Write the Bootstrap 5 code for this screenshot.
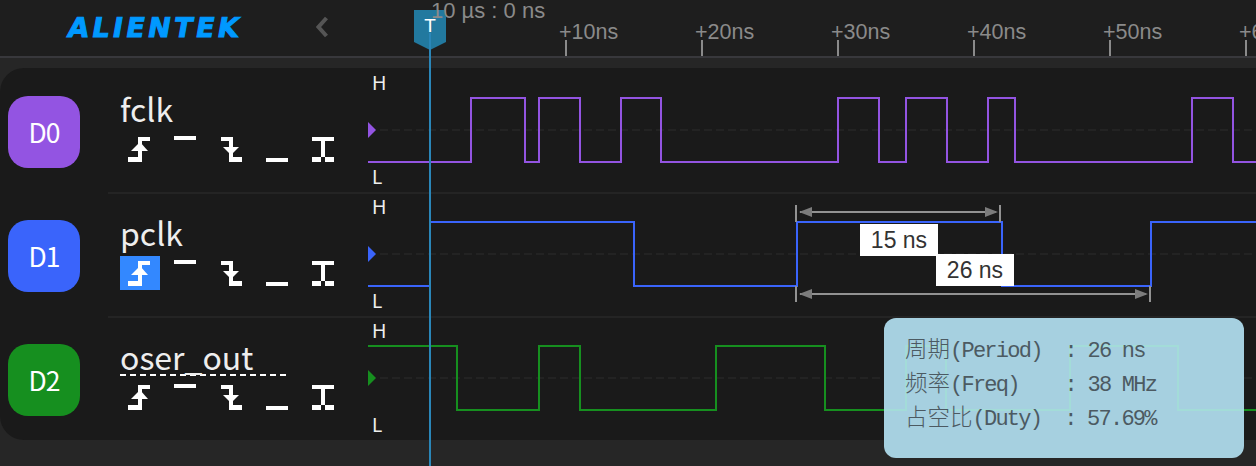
<!DOCTYPE html>
<html lang="zh">
<head>
    <meta charset="UTF-8">
    <meta name="viewport" content="width=device-width, initial-scale=1.0">
    <title>Logic analyzer</title>
    <link href="https://cdn.jsdelivr.net/npm/bootstrap@5.3.2/dist/css/bootstrap.min.css" rel="stylesheet">
    <style>
        body { background: #262626; width: 1256px; height: 466px; overflow: hidden; font-family: "Liberation Sans", sans-serif; }
        .scope { width: 1256px; height: 466px; overflow: hidden; }

        /* header + ruler */
        .scope-head { height: 58px; background: #1e1e1e; border-bottom: 2px solid #38383c; }
        .logo-box { flex: 0 0 368px; width: 368px; padding-left: 65px; padding-right: 38px; }
        .logo-text { display: inline-block; margin-top: 11px; font-family: "DejaVu Sans", sans-serif; font-weight: 700; font-size: 27px; line-height: 34px; letter-spacing: 3.4px; color: #0099ff; -webkit-text-stroke: 1px #0099ff; transform: skewX(-10deg); transform-origin: left bottom; }
        .ruler { padding-left: 198px; height: 56px; overflow: hidden; }
        .tick-item { flex: 0 0 136px; width: 136px; }
        .tick-label { margin-left: -7px; font-size: 21.5px; line-height: 16px; color: #8a8a8a; white-space: nowrap; }
        .tick-mark { width: 2px; height: 16px; margin-left: -1px; background: #8a8a8a; }

        /* channels */
        .panel { margin-top: 10px; height: 372px; padding-top: 2px; background: #1a1a1a; border-radius: 24px 0 0 24px; }
        .ch-row { height: 124px; }
        .ch-row:last-child { height: 122px; }
        .ch-badge { flex: 0 0 72px; width: 72px; height: 72px; margin: 26px 28px 0 8px; border-radius: 20px; color: #fff; font-family: "Noto Sans CJK SC", "Noto Sans", sans-serif; font-size: 26.5px; letter-spacing: -1px; }
        .bg-d0 { background: #9354e2; }
        .bg-d1 { background: #3a64fb; }
        .bg-d2 { background: #168f1f; }
        .ch-body { border-bottom: 2px solid #242424; padding-left: 12px; min-width: 0; }
        .ch-row:last-child .ch-body { border-bottom: 0; }
        .ch-info { flex: 0 0 248px; width: 248px; padding-top: 19px; }
        .ch-name { height: 39px; line-height: 38px; margin-bottom: 4px; font-family: "Noto Sans CJK SC", "Noto Sans", sans-serif; font-size: 32px; color: #eeeeee; }
        .ch-name.editing { width: 166px; border-bottom: 2px dashed #fff; }
        .trig-row { gap: 6px; }
        .trig-btn { width: 40px; height: 34px; padding: 0; border: 0; border-radius: 0; line-height: 0; color: #fff; }
        .trig-btn.active, .trig-btn:hover { background: #3388ff !important; color: #fff; }
        .trig-btn svg { width: 40px; height: 34px; display: block; }
        .wave { width: 888px; height: 122px; display: block; flex: 0 0 888px; }
        .wave text { font-family: "Noto Sans", sans-serif; font-size: 19.5px; fill: #eeeeee; }
        .wave .midline { stroke: #232323; stroke-width: 2; stroke-dasharray: 8 4; }
        .wave .sig { fill: none; stroke-width: 2; }
        .wave .dim { stroke: #929292; stroke-width: 2; fill: none; }
        .wave .dim-head { fill: #7c7c7c; }
        .measure-tag { position: absolute; width: 78px; height: 32px; background: #fff; color: #333; font-size: 23px; line-height: 32px; text-align: center; }
        .tag-a { left: 492px; top: 30px; }
        .tag-b { left: 568px; top: 60px; }

        /* cursor */
        .cursor-time { position: absolute; left: 431px; top: 0; font-size: 22px; line-height: 22px; color: #8a8a8a; white-space: nowrap; z-index: 4; }
        .cursor-flag { position: absolute; left: 414px; top: 10px; width: 32px; height: 40px; z-index: 3; }
        .cursor-t { position: absolute; left: 414px; top: 14px; width: 32px; text-align: center; color: #fff; font-size: 19px; line-height: 24px; z-index: 5; }
        .cursor-line { position: absolute; left: 429px; top: 33px; width: 2px; height: 433px; background: #2a86b8; z-index: 3; }

        /* info popup */
        .info-box { position: absolute; left: 884px; top: 318px; width: 360px; height: 140px; padding: 17px 21px; background: #a6d0e0; border-radius: 12px; overflow: hidden; z-index: 6; }
        .info-box svg { position: absolute; left: 0; top: 0; }
        .info-text { position: relative; margin: 0; font-family: "Liberation Mono", "Noto Sans CJK SC", monospace; font-size: 22px; letter-spacing: -1.75px; line-height: 34px; color: #4c5a62; white-space: pre; }
        .info-text span { font-family: "Noto Sans CJK SC", sans-serif; font-size: 22.5px; font-weight: 300; letter-spacing: 0; line-height: 0; }
    </style>
</head>
<body>
    <svg width="0" height="0" class="position-absolute">
        <symbol id="ic-rise" viewBox="0 0 40 34">
            <path shape-rendering="crispEdges" fill="currentColor" d="M18 5h12v4H22v21H8v-5h10z"/>
            <path fill="currentColor" d="M20 10l8 9H11z"/>
        </symbol>
        <symbol id="ic-high" viewBox="0 0 40 34">
            <rect x="8" y="4" width="22" height="4" fill="currentColor"/>
        </symbol>
        <symbol id="ic-fall" viewBox="0 0 40 34">
            <path shape-rendering="crispEdges" fill="currentColor" d="M9 5h12v20h9v5H17V9H9z"/>
            <path fill="currentColor" d="M11 15h16l-8 8z"/>
        </symbol>
        <symbol id="ic-low" viewBox="0 0 40 34">
            <rect x="8" y="26" width="22" height="4" fill="currentColor"/>
        </symbol>
        <symbol id="ic-edge" viewBox="0 0 40 34">
            <path shape-rendering="crispEdges" fill="currentColor" d="M8 5h22v4h-9v16h-4V9H8zM8 25h9v5H8zM21 25h9v5h-9z"/>
        </symbol>
    </svg>

    <div class="scope position-relative">
        <!-- HEADER -->
        <div class="scope-head d-flex">
            <div class="logo-box d-flex align-items-start justify-content-between">
                <span class="logo-text">ALIENTEK</span>
                <svg class="mt-3" width="14" height="22" viewBox="0 0 14 22">
                    <polyline points="10.5,2 2.5,11 10.5,20" fill="none" stroke="#555555" stroke-width="4"/>
                </svg>
            </div>
            <div class="ruler d-flex flex-grow-1">
                <div class="tick-item d-flex flex-column justify-content-end"><div class="tick-label">+10ns</div><div class="tick-mark"></div></div>
                <div class="tick-item d-flex flex-column justify-content-end"><div class="tick-label">+20ns</div><div class="tick-mark"></div></div>
                <div class="tick-item d-flex flex-column justify-content-end"><div class="tick-label">+30ns</div><div class="tick-mark"></div></div>
                <div class="tick-item d-flex flex-column justify-content-end"><div class="tick-label">+40ns</div><div class="tick-mark"></div></div>
                <div class="tick-item d-flex flex-column justify-content-end"><div class="tick-label">+50ns</div><div class="tick-mark"></div></div>
                <div class="tick-item d-flex flex-column justify-content-end"><div class="tick-label">+60ns</div><div class="tick-mark"></div></div>
            </div>
        </div>

        <!-- CHANNELS -->
        <div class="panel">
            <div class="ch-row d-flex">
                <div class="ch-badge bg-d0 d-flex align-items-center justify-content-center">D0</div>
                <div class="ch-body d-flex flex-grow-1">
                    <div class="ch-info">
                        <div class="ch-name">fclk</div>
                        <div class="d-flex trig-row">
                            <button class="btn trig-btn"><svg><use href="#ic-rise"/></svg></button>
                            <button class="btn trig-btn"><svg><use href="#ic-high"/></svg></button>
                            <button class="btn trig-btn"><svg><use href="#ic-fall"/></svg></button>
                            <button class="btn trig-btn"><svg><use href="#ic-low"/></svg></button>
                            <button class="btn trig-btn"><svg><use href="#ic-edge"/></svg></button>
                        </div>
                    </div>
                    <svg class="wave" viewBox="368 0 888 122">
                        <text x="372" y="20">H</text>
                        <text x="372" y="114">L</text>
                        <path d="M368 52l8 8-8 8z" fill="#9354e2"/>
                        <line class="midline" x1="380" y1="60" x2="1256" y2="60"/>
                        <path class="sig" stroke="#9354e2" d="M368 92H471V28H525V92H539V28H580V92H621V28H661V92H838V28H879V92H906V28H947V92H988V28H1015V92H1192V28H1233V92H1256"/>
                    </svg>
                </div>
            </div>

            <div class="ch-row d-flex">
                <div class="ch-badge bg-d1 d-flex align-items-center justify-content-center">D1</div>
                <div class="ch-body d-flex flex-grow-1">
                    <div class="ch-info">
                        <div class="ch-name">pclk</div>
                        <div class="d-flex trig-row">
                            <button class="btn trig-btn active"><svg><use href="#ic-rise"/></svg></button>
                            <button class="btn trig-btn"><svg><use href="#ic-high"/></svg></button>
                            <button class="btn trig-btn"><svg><use href="#ic-fall"/></svg></button>
                            <button class="btn trig-btn"><svg><use href="#ic-low"/></svg></button>
                            <button class="btn trig-btn"><svg><use href="#ic-edge"/></svg></button>
                        </div>
                    </div>
                    <div class="position-relative">
                        <svg class="wave" viewBox="368 0 888 122">
                            <text x="372" y="20">H</text>
                            <text x="372" y="114">L</text>
                            <path d="M368 52l8 8-8 8z" fill="#3a64fb"/>
                            <line class="midline" x1="380" y1="60" x2="1256" y2="60"/>
                            <path class="sig" stroke="#3a64fb" d="M368 92H430V28H634V92H797V28H1002V92H1151V28H1256"/>
                            <!-- mesure 15 ns / 26 ns -->
                            <path class="dim" d="M796 11V28M1000 11V28M800 18H996"/>
                            <path class="dim-head" d="M799 18l13-5v10zM998 18l-13-5v10z"/>
                            <path class="dim" d="M796 92V108M1150 92V108M800 100H1146"/>
                            <path class="dim-head" d="M799 100l13-5v10zM1148 100l-13-5v10z"/>
                        </svg>
                        <span class="measure-tag tag-a">15 ns</span>
                        <span class="measure-tag tag-b">26 ns</span>
                    </div>
                </div>
            </div>

            <div class="ch-row d-flex">
                <div class="ch-badge bg-d2 d-flex align-items-center justify-content-center">D2</div>
                <div class="ch-body d-flex flex-grow-1">
                    <div class="ch-info">
                        <div class="ch-name editing">oser_out</div>
                        <div class="d-flex trig-row">
                            <button class="btn trig-btn"><svg><use href="#ic-rise"/></svg></button>
                            <button class="btn trig-btn"><svg><use href="#ic-high"/></svg></button>
                            <button class="btn trig-btn"><svg><use href="#ic-fall"/></svg></button>
                            <button class="btn trig-btn"><svg><use href="#ic-low"/></svg></button>
                            <button class="btn trig-btn"><svg><use href="#ic-edge"/></svg></button>
                        </div>
                    </div>
                    <svg class="wave" viewBox="368 0 888 122">
                        <text x="372" y="20">H</text>
                        <text x="372" y="114">L</text>
                        <path d="M368 52l8 8-8 8z" fill="#168f1f"/>
                        <line class="midline" x1="380" y1="60" x2="1256" y2="60"/>
                        <path class="sig" stroke="#168f1f" d="M368 28H457V92H539V28H580V92H716V28H825V92H906V28H946V92H1070V28H1178V92H1256"/>
                    </svg>
                </div>
            </div>
        </div>

        <!-- CURSOR T -->
        <svg class="cursor-flag" viewBox="0 0 32 40">
            <path d="M0 0H32V32L16 40 0 32z" fill="#22799f"/>
        </svg>
        <div class="cursor-line"></div>
        <div class="cursor-t">T</div>
        <div class="cursor-time">10 µs : 0 ns</div>

        <!-- INFO -->
        <div class="info-box">
            <svg width="360" height="140" viewBox="0 0 360 140">
                <path d="M0 92H22V28H62V92H186V28H294V92H360" fill="none" stroke="#a3dcd8" stroke-width="2"/>
            </svg>
            <p class="info-text"><span>周期</span>(Period)  : 26 ns
<span>频率</span>(Freq)    : 38 MHz
<span>占空比</span>(Duty)  : 57.69%</p>
        </div>
    </div>

    <script src="https://cdn.jsdelivr.net/npm/bootstrap@5.3.2/dist/js/bootstrap.bundle.min.js"></script>
</body>
</html>
